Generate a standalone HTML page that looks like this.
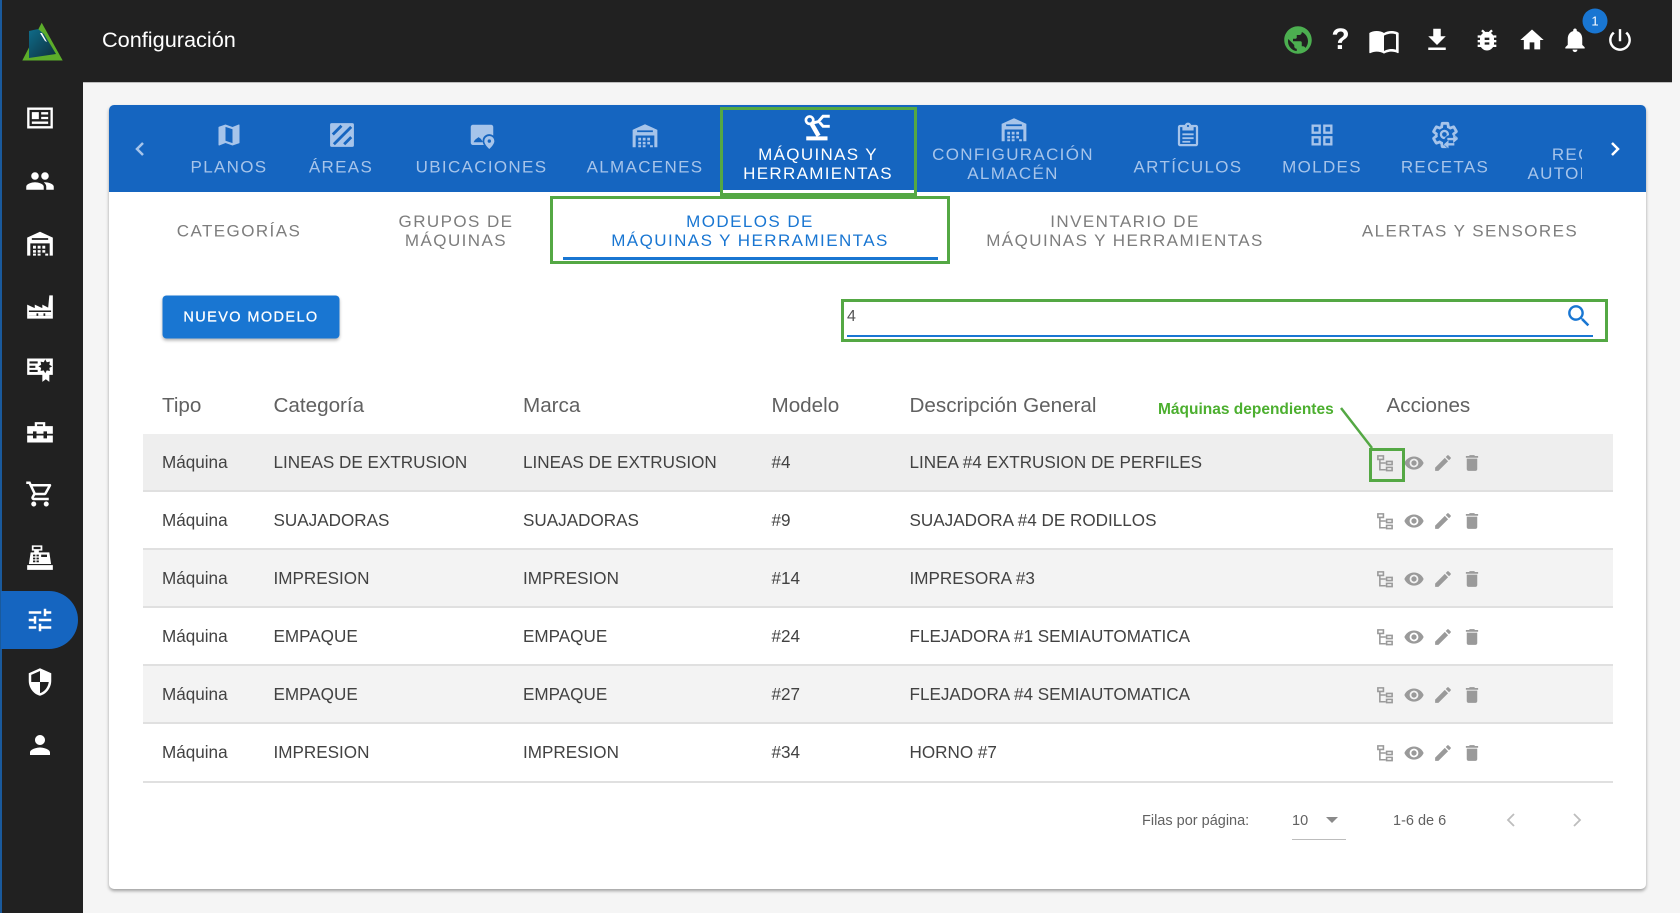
<!DOCTYPE html>
<html lang="es"><head><meta charset="utf-8"><title>Configuración</title>
<style>
html,body{margin:0;padding:0;width:1680px;height:913px;overflow:hidden;background:#f5f5f5;font-family:"Liberation Sans",sans-serif;color:#424242}
.b{position:absolute}
.t{position:absolute;white-space:nowrap;transform:translate(-50%,-50%);text-align:center;line-height:19px}
.l{position:absolute;white-space:nowrap;transform:translateY(-50%)}
.i{position:absolute;transform:translate(-50%,-50%);overflow:visible}
.side{fill:#fff}
.tab{font-size:17px;letter-spacing:1.33px;color:#a6c4ea}
.sub{font-size:17px;letter-spacing:1.43px;color:#7d7d7d}
.th{font-size:20.65px;color:#616161;top:406px}
.td{font-size:17.1px;color:#424242}
.ti{fill:#a6c4ea}
.ac{fill:#9a9a9a}
.g{border:3px solid #54a844;box-sizing:border-box;position:absolute}
.row{position:absolute;left:143px;width:1470px;height:58px;border-bottom:2px solid #e0e0e0;box-sizing:border-box}
</style></head>
<body>
<svg width="0" height="0" style="position:absolute"><defs>
<symbol id="news" viewBox="0 0 24 24"><path fill-rule="evenodd" d="M1 3h22v18H1zM3 5v14h18V5z"/><path d="M5 7h6v6H5zM13 7h6v2h-6zM13 11h6v2h-6zM5 15h14v2H5z"/></symbol>
<symbol id="people" viewBox="0 0 24 24"><path d="M16 11c1.66 0 2.99-1.34 2.99-3S17.66 5 16 5c-1.66 0-3 1.34-3 3s1.34 3 3 3zm-8 0c1.66 0 2.99-1.34 2.99-3S9.66 5 8 5C6.34 5 5 6.34 5 8s1.34 3 3 3zm0 2c-2.33 0-7 1.17-7 3.5V19h14v-2.5c0-2.33-4.67-3.5-7-3.5zm8 0c-.29 0-.62.02-.97.05 1.16.84 1.97 1.97 1.97 3.45V19h6v-2.5c0-2.33-4.67-3.5-7-3.5z"/></symbol>
<symbol id="ware" viewBox="0 0 24 24"><path fill-rule="evenodd" d="M12 1.500 23 6.500V22h-2.700V11.500H3.700V22H1V6.500zM5 7h14v1.500H5z"/><path d="M6 13.500h2.500V16H6zM10 13.500h2.500V16H10zM14 13.500h2.500V16H14zM6 17.200h2.500v2.200H6zM10 17.200h2.500v2.200H10zM14 17.200h2.500v2.200H14zM6 20.200h2.500V22H6zM10 20.200h2.500V22H10zM16.500 20.200H19V22h-2.500z"/></symbol>
<symbol id="factory" viewBox="0 0 24 24"><path fill-rule="evenodd" d="M1 22V10l6.500 3V10l6.500 3V10l5 2.500L20 2h3v20zM2.500 15v1.300h19V15zM9 17.500v2H10.500v-2zM15 17.500v2H16.500v-2zM2.500 19.500v.1h19v-.1z"/></symbol>
<symbol id="cert" viewBox="0 0 24 24"><path fill-rule="evenodd" d="M1 3h22v14h-3v6l-3-2.200L14 23v-6H1zM3 5.500v1.800h7V5.500zM3 9.200V11h5V9.200zM3 12.800v1.800h7v-1.800zM16.500 3.800l1.300 2.400 2.700-.5-.5 2.700 2.400 1.300-2.400 1.300.5 2.700-2.700-.5-1.300 2.400-1.300-2.400-2.700.5.500-2.700-2.400-1.300 2.400-1.300-.5-2.700 2.700.5z"/></symbol>
<symbol id="tool" viewBox="0 0 24 24"><path fill-rule="evenodd" d="M7.500 7V3.500h9V7H23v6.500h-5v-2h-3v2H9v-2H6v2H1V7zM9.500 5.500V7h5V5.500zM1 15h5v2.500h3V15h6v2.500h3V15h5v6H1z"/></symbol>
<symbol id="cart" viewBox="0 0 24 24"><path d="M15.550 13c.75 0 1.410-.41 1.750-1.030l3.580-6.490c.37-.66-.11-1.480-.87-1.480H5.210l-.94-2H1v2h2l3.600 7.590-1.350 2.440C4.520 15.370 5.480 17 7 17h12v-2H7l1.100-2h7.450zM6.160 6h12.150l-2.760 5H8.530L6.160 6zM7 18c-1.100 0-1.990.9-1.990 2S5.900 22 7 22s2-.9 2-2-.9-2-2-2zm10 0c-1.100 0-1.990.9-1.990 2s.89 2 1.990 2 2-.9 2-2-.9-2-2-2z"/></symbol>
<symbol id="reg" viewBox="0 0 24 24"><path fill-rule="evenodd" d="M5 2h9v4.500h-3V8h9l1.500 10h-19L4 8h3V6.500H5zM6.500 3.300v1.900h6V3.300zM6 10v1.500h2V10zM9 10v1.500h2V10zM6 12.500V14h2v-1.500zM9 12.500V14h2v-1.500zM6 15v1.500h2V15zM9 15v1.500h2V15zM13 10v2h5v-2z"/><path d="M1 19h22v4H1z"/></symbol>
<symbol id="tune" viewBox="0 0 24 24"><path d="M3 17v2h6v-2H3zM3 5v2h10V5H3zm10 16v-2h8v-2h-8v-2h-2v6h2zM7 9v2H3v2h4v2h2V9H7zm14 4v-2H11v2h10zm-6-4h2V7h4V5h-4V3h-2v6z"/></symbol>
<symbol id="shield" viewBox="0 0 24 24"><path d="M12 1L3 5v6c0 5.550 3.840 10.740 9 12 5.160-1.260 9-6.450 9-12V5l-9-4zm0 10.990h7c-.53 4.120-3.280 7.790-7 8.940V12H5V6.300l7-3.110v8.800z"/></symbol>
<symbol id="person" viewBox="0 0 24 24"><path d="M12 12c2.210 0 4-1.790 4-4s-1.790-4-4-4-4 1.790-4 4 1.790 4 4 4zm0 2c-2.670 0-8 1.340-8 4v2h16v-2c0-2.660-5.330-4-8-4z"/></symbol>
<symbol id="map" viewBox="0 0 24 24"><path d="M20.500 3l-.16.03L15 5.100 9 3 3.360 4.900c-.21.07-.36.25-.36.48V20.500c0 .28.22.5.5.5l.16-.03L9 18.900l6 2.100 5.640-1.900c.21-.07.36-.25.36-.48V3.500c0-.28-.22-.5-.5-.5zM15 19l-6-2.110V5l6 2.110V19z"/></symbol>
<symbol id="area" viewBox="0 0 24 24"><rect x="1" y="1" width="22" height="22" rx="1.500"/><path d="M3.500 11.500l8-8M4.500 20.500l16-16M14 20.500l6.500-6.500" stroke="#1565c0" stroke-width="2.600" fill="none"/></symbol>
<symbol id="imgloc" viewBox="0 0 24 24"><path fill-rule="evenodd" d="M4 2h16a2 2 0 0 1 2 2v7.500A6 6 0 0 0 12.500 16c0 1.500.5 3 1.200 4H4a2 2 0 0 1-2-2V4a2 2 0 0 1 2-2zM4.500 17.500h8.500l-2-3-2-1.500-2.500 1.800-1 1z"/><path fill-rule="evenodd" d="M18.500 12a4.500 4.500 0 0 1 4.500 4.500C23 19.500 18.500 23.500 18.500 23.500S14 19.500 14 16.500A4.500 4.500 0 0 1 18.500 12zM18.500 15a1.500 1.500 0 1 0 0 3 1.500 1.500 0 0 0 0-3z"/></symbol>
<symbol id="clip" viewBox="0 0 24 24"><path d="M19 3h-4.180C14.400 1.840 13.300 1 12 1s-2.400.84-2.820 2H5c-1.100 0-2 .9-2 2v15c0 1.100.9 2 2 2h14c1.100 0 2-.9 2-2V5c0-1.100-.9-2-2-2zm-7 0c.55 0 1 .45 1 1s-.45 1-1 1-1-.45-1-1 .45-1 1-1zm7 17H5V5h2v3h10V5h2v15z"/><path d="M7 10.500h10v1.700H7zM7 14h10v1.700H7zM7 17.200h7v1.600H7z"/></symbol>
<symbol id="grid" viewBox="0 0 24 24"><path d="M3 3v8h8V3H3zm6 6H5V5h4v4zm-6 4v8h8v-8H3zm6 6H5v-4h4v4zm4-16v8h8V3h-8zm6 6h-4V5h4v4zm-6 4v8h8v-8h-8zm6 6h-4v-4h4v4z"/></symbol>
<symbol id="gear" viewBox="0 0 24 24"><path fill="none" stroke="#a6c4ea" stroke-width="2.400" d="M19.430 12.980c.04-.32.07-.64.07-.98s-.03-.66-.07-.98l2.110-1.650c.19-.15.24-.42.12-.64l-2-3.460c-.12-.22-.39-.3-.61-.22l-2.490 1c-.52-.4-1.080-.73-1.690-.98l-.38-2.650C14.460 2.180 14.250 2 14 2h-4c-.25 0-.46.18-.49.42l-.38 2.650c-.61.25-1.170.59-1.690.98l-2.490-1c-.23-.09-.49 0-.61.22l-2 3.460c-.13.22-.07.49.12.64l2.110 1.650c-.04.32-.07.65-.07.98s.03.66.07.98l-2.110 1.650c-.19.15-.24.42-.12.64l2 3.460c.12.22.39.3.61.22l2.490-1c.52.4 1.080.73 1.690.98l.38 2.650c.03.24.24.42.49.42h4c.25 0 .46-.18.49-.42l.38-2.650c.61-.25 1.170-.59 1.690-.98l2.490 1c.23.09.49 0 .61-.22l2-3.460c.12-.22.07-.49-.12-.64z"/><circle cx="11.500" cy="11.500" r="3" fill="none" stroke="#a6c4ea" stroke-width="2"/><circle cx="17" cy="18" r="6" fill="#1565c0"/><path fill="#a6c4ea" d="M14 14.500h5v-2.500l4 3.500-4 3.500v-2.500h-5zM11 20l4-3.500V19h5v2h-5v2.500z"/></symbol>
<symbol id="robot" viewBox="0 0 25 25"><circle cx="5" cy="5.500" r="3.300" fill="none" stroke="#fff" stroke-width="2.400"/><path d="M7 9l6 10.500" stroke="#fff" stroke-width="4" fill="none"/><path d="M8 8l6-1.500M13 6.500 17 2h6M14 7.500l3 3.500h6" stroke="#fff" stroke-width="2.600" fill="none"/><path d="M2 20h19v3.500H2z" fill="#fff"/></symbol>
<symbol id="tree" viewBox="0 0 24 24"><path fill-rule="evenodd" d="M2 2h9v6.500H2zM4 4v2.500h5V4zM13 9h9v6h-9zM15 11v2h5v-2zM13 16.500h9v6h-9zM15 18.500v2h5v-2z"/><path d="M4.500 8H6.500v11.500h6.500v2H4.500zM6 11h7v2H6z"/></symbol>
<symbol id="eye" viewBox="0 0 24 24"><path d="M12 4.500C7 4.500 2.730 7.610 1 12c1.730 4.390 6 7.500 11 7.500s9.270-3.110 11-7.500c-1.730-4.390-6-7.500-11-7.500zM12 17c-2.760 0-5-2.240-5-5s2.240-5 5-5 5 2.240 5 5-2.240 5-5 5zm0-8c-1.660 0-3 1.340-3 3s1.340 3 3 3 3-1.340 3-3-1.340-3-3-3z"/></symbol>
<symbol id="edit" viewBox="0 0 24 24"><path d="M3 17.250V21h3.750L17.810 9.940l-3.750-3.750L3 17.250zM20.710 7.040c.39-.39.39-1.020 0-1.410l-2.340-2.340c-.39-.39-1.020-.39-1.410 0l-1.830 1.830 3.750 3.750 1.830-1.830z"/></symbol>
<symbol id="del" viewBox="0 0 24 24"><path d="M6 19c0 1.100.9 2 2 2h8c1.100 0 2-.9 2-2V7H6v12zM19 4h-3.500l-1-1h-5l-1 1H5v2h14V4z"/></symbol>
</defs></svg>

<!-- app chrome -->
<div class="b" style="left:0;top:0;width:1672px;height:82px;background:#212121;border-bottom:1px solid #bdbdbd"></div>
<div class="b" style="left:0;top:0;width:83px;height:913px;background:#212121"></div>
<div class="b" style="left:0;top:0;width:1.500px;height:913px;background:#1a5a9c"></div>

<svg class="i" style="left:42px;top:42px;width:46px;height:40px" viewBox="0 0 46 40">
<defs><linearGradient id="lg" x1="0" y1="0" x2="1" y2="1"><stop offset="0" stop-color="#0f6c8a"/><stop offset="1" stop-color="#0d2f3c"/></linearGradient></defs>
<path d="M22.700 .7 43.700 38.500H3.300z" fill="#5cad2a"/><path d="M10 9 19 7 25 12 37 32 10 36z" fill="url(#lg)"/><path d="M21 11 23 11 28 20 26 19z" fill="#fff"/></svg>
<div class="l" style="left:102px;top:40px;font-size:21.7px;color:#fff">Configuración</div>

<!-- sidebar -->
<svg class="i side" style="left:40px;top:118px;width:28px;height:28px"><use href="#news"/></svg>
<svg class="i side" style="left:40px;top:181px;width:30px;height:30px"><use href="#people"/></svg>
<svg class="i side" style="left:40px;top:244px;width:28px;height:28px"><use href="#ware"/></svg>
<svg class="i side" style="left:40px;top:307px;width:28px;height:28px"><use href="#factory"/></svg>
<svg class="i side" style="left:40px;top:369px;width:28px;height:28px"><use href="#cert"/></svg>
<svg class="i side" style="left:40px;top:432px;width:28px;height:28px"><use href="#tool"/></svg>
<svg class="i side" style="left:40px;top:494px;width:30px;height:30px"><use href="#cart"/></svg>
<svg class="i side" style="left:40px;top:557px;width:28px;height:28px"><use href="#reg"/></svg>
<div class="b" style="left:1px;top:591px;width:77px;height:58px;background:#1565c0;border-radius:0 29px 29px 0"></div>
<svg class="i side" style="left:40px;top:620px;width:30px;height:30px"><use href="#tune"/></svg>
<svg class="i side" style="left:40px;top:682px;width:30px;height:30px"><use href="#shield"/></svg>
<svg class="i side" style="left:40px;top:745px;width:30px;height:30px"><use href="#person"/></svg>

<!-- topbar icons -->
<svg class="i" style="left:1297.500px;top:40px;width:30px;height:30px" viewBox="0 0 24 24"><circle cx="12" cy="12" r="11" fill="#212121"/><path fill="#4caf50" d="M12 1C5.930 1 1 5.930 1 12s4.930 11 11 11 11-4.930 11-11S18.070 1 12 1zm-1 19.930c-3.950-.49-7-3.850-7-7.930 0-.62.08-1.210.21-1.790L9 16v1c0 1.100.9 2 2 2v1.930zm6.900-2.540c-.26-.81-1-1.390-1.900-1.390h-1v-3c0-.55-.45-1-1-1H8v-2h2c.55 0 1-.45 1-1V8h2c1.100 0 2-.9 2-2v-.41c2.930 1.190 5 4.060 5 7.410 0 2.080-.8 3.970-2.100 5.390z"/></svg>
<div class="t" style="left:1340.500px;top:40px;font-size:30px;font-weight:bold;color:#fff;line-height:30px">?</div>
<svg class="i" style="left:1384px;top:41px;fill:#fff;width:32px;height:32px" viewBox="0 0 24 24"><path d="M21 5c-1.110-.35-2.330-.5-3.500-.5-1.950 0-4.050.4-5.500 1.500-1.450-1.100-3.550-1.500-5.500-1.500S2.450 4.900 1 6v14.650c0 .25.25.5.5.5.1 0 .15-.05.25-.05C3.100 20.450 5.050 20 6.500 20c1.950 0 4.050.4 5.500 1.500 1.350-.85 3.800-1.500 5.500-1.500 1.650 0 3.350.3 4.750 1.050.1.05.15.05.25.05.25 0 .5-.25.5-.5V6c-.6-.45-1.250-.75-2-1zm0 13.500c-1.100-.35-2.300-.5-3.500-.5-1.700 0-4.150.65-5.500 1.500V8c1.350-.85 3.800-1.500 5.500-1.500 1.200 0 2.400.15 3.500.5v11.500z"/></svg>
<svg class="i" style="left:1437px;top:40px;fill:#fff;width:30px;height:30px" viewBox="0 0 24 24"><path d="M19 9h-4V3H9v6H5l7 7 7-7zM5 18v2h14v-2H5z"/></svg>
<svg class="i" style="left:1487px;top:40px;fill:#fff;width:28px;height:28px" viewBox="0 0 24 24"><path d="M20 8h-2.810c-.45-.78-1.070-1.450-1.820-1.960L17 4.410 15.590 3l-2.170 2.170C12.960 5.060 12.490 5 12 5c-.49 0-.96.06-1.410.17L8.410 3 7 4.410l1.620 1.630C7.880 6.550 7.260 7.220 6.810 8H4v2h2.090c-.05.33-.09.66-.09 1v1H4v2h2v1c0 .34.04.67.09 1H4v2h2.810c1.040 1.790 2.970 3 5.190 3s4.150-1.210 5.190-3H20v-2h-2.090c.05-.33.09-.66.09-1v-1h2v-2h-2v-1c0-.34-.04-.67-.09-1H20V8zm-6 8h-4v-2h4v2zm0-4h-4v-2h4v2z"/></svg>
<svg class="i" style="left:1532px;top:40px;fill:#fff;width:28px;height:28px" viewBox="0 0 24 24"><path d="M10 20v-6h4v6h5v-8h3L12 3 2 12h3v8z"/></svg>
<svg class="i" style="left:1575px;top:40px;fill:#fff;width:29px;height:29px" viewBox="0 0 24 24"><path d="M12 22c1.100 0 2-.9 2-2h-4c0 1.100.89 2 2 2zm6-6v-5c0-3.070-1.640-5.640-4.500-6.320V4c0-.83-.67-1.500-1.500-1.500s-1.500.67-1.500 1.500v.68C7.630 5.360 6 7.920 6 11v5l-2 2v1h16v-1l-2-2z"/></svg>
<div class="t" style="left:1595px;top:21px;width:25px;height:25px;border-radius:50%;background:#1976d2;color:#fff;font-size:13px;line-height:25px">1</div>
<svg class="i" style="left:1620px;top:40px;fill:#fff;width:29px;height:29px" viewBox="0 0 24 24"><path d="M13 3h-2v10h2V3zm4.830 2.170l-1.420 1.420C17.990 7.860 19 9.810 19 12c0 3.870-3.130 7-7 7s-7-3.130-7-7c0-2.190 1.010-4.140 2.580-5.420L6.170 5.170C4.230 6.820 3 9.260 3 12c0 4.970 4.030 9 9 9s9-4.030 9-9c0-2.740-1.230-5.180-3.170-6.830z"/></svg>

<!-- card -->
<div class="b" style="left:109px;top:105px;width:1537px;height:784px;background:#fff;border-radius:5px;box-shadow:0 2px 3px rgba(0,0,0,.35)"></div>
<div class="b" style="left:109px;top:105px;width:1537px;height:87px;background:#1565c0;border-radius:5px 5px 0 0"></div>

<!-- main tabs -->
<svg class="i" style="left:140px;top:149px;fill:none;stroke:#a6c4ea;stroke-width:2.500;width:12px;height:16px" viewBox="0 0 12 16"><path d="M9 2 3 8l6 6"/></svg>
<svg class="i" style="left:1615px;top:149px;fill:none;stroke:#fff;stroke-width:2.500;width:12px;height:16px" viewBox="0 0 12 16"><path d="M3 2l6 6-6 6"/></svg>

<svg class="i ti" style="left:229px;top:135px;width:28px;height:28px"><use href="#map"/></svg>
<div class="t tab" style="left:229px;top:167px">PLANOS</div>
<svg class="i ti" style="left:342px;top:135px;width:26px;height:26px"><use href="#area"/></svg>
<div class="t tab" style="left:341px;top:167px">ÁREAS</div>
<svg class="i ti" style="left:482px;top:136px;width:27px;height:27px"><use href="#imgloc"/></svg>
<div class="t tab" style="left:481.500px;top:167px">UBICACIONES</div>
<svg class="i ti" style="left:645px;top:136px;width:27px;height:27px"><use href="#ware"/></svg>
<div class="t tab" style="left:645px;top:167px">ALMACENES</div>

<svg class="i" style="left:818px;top:128px;width:28px;height:28px"><use href="#robot"/></svg>
<div class="t tab" style="left:818px;top:163.500px;color:#fff">MÁQUINAS Y<br>HERRAMIENTAS</div>
<div class="b" style="left:723px;top:190px;width:191px;height:3px;background:#fff"></div>
<div class="g" style="left:720px;top:107px;width:197px;height:89px"></div>

<svg class="i ti" style="left:1014px;top:130px;width:27px;height:27px"><use href="#ware"/></svg>
<div class="t tab" style="left:1013px;top:163.500px">CONFIGURACIÓN<br>ALMACÉN</div>
<svg class="i ti" style="left:1188px;top:135px;width:27px;height:27px"><use href="#clip"/></svg>
<div class="t tab" style="left:1188px;top:167px">ARTÍCULOS</div>
<svg class="i ti" style="left:1322px;top:135px;width:28px;height:28px"><use href="#grid"/></svg>
<div class="t tab" style="left:1322px;top:167px">MOLDES</div>
<svg class="i" style="left:1445px;top:135px;width:28px;height:28px"><use href="#gear"/></svg>
<div class="t tab" style="left:1445px;top:167px">RECETAS</div>
<div class="b" style="left:1520px;top:105px;width:62px;height:87px;overflow:hidden"><div class="t tab" style="left:76px;top:58.500px">RECETAS<br>AUTOMÁTICAS</div></div>

<!-- sub tabs -->
<div class="t sub" style="left:239px;top:230.500px">CATEGORÍAS</div>
<div class="t sub" style="left:456px;top:230.500px">GRUPOS DE<br>MÁQUINAS</div>
<div class="t sub" style="left:750px;top:230.500px;color:#1976d2">MODELOS DE<br>MÁQUINAS Y HERRAMIENTAS</div>
<div class="b" style="left:563px;top:257px;width:375px;height:2.500px;background:#1976d2"></div>
<div class="g" style="left:550px;top:196px;width:400px;height:68px"></div>
<div class="t sub" style="left:1125px;top:230.500px">INVENTARIO DE<br>MÁQUINAS Y HERRAMIENTAS</div>
<div class="t sub" style="left:1470px;top:230.500px">ALERTAS Y SENSORES</div>

<!-- toolbar -->
<div class="t" style="left:251px;top:317px;width:177px;height:43px;background:#1976d2;border-radius:4px;color:#fff;font-size:14.500px;letter-spacing:1.400px;line-height:45px;box-shadow:0 2px 3px rgba(0,0,0,.3);-webkit-text-stroke:.25px #fff">NUEVO MODELO</div>
<div class="g" style="left:841px;top:299px;width:767px;height:43px"></div>
<div class="l" style="left:847px;top:317px;font-size:16px;color:#555">4</div>
<div class="b" style="left:847px;top:334.500px;width:746px;height:2px;background:#1976d2"></div>
<svg class="i" style="left:1578.500px;top:316px;width:29px;height:29px;fill:#1976d2" viewBox="0 0 24 24"><path d="M15.500 14h-.79l-.28-.27C15.410 12.590 16 11.110 16 9.500 16 5.910 13.090 3 9.500 3S3 5.910 3 9.500 5.910 16 9.500 16c1.610 0 3.090-.59 4.230-1.570l.27.28v.79l5 4.990L20.490 19l-4.990-5zm-6 0C7.010 14 5 11.990 5 9.500S7.010 5 9.500 5 14 7.010 14 9.500 11.990 14 9.500 14z"/></svg>

<!-- table -->
<div class="l th" style="left:162px">Tipo</div>
<div class="l th" style="left:273.500px">Categoría</div>
<div class="l th" style="left:523px">Marca</div>
<div class="l th" style="left:771.500px">Modelo</div>
<div class="l th" style="left:909.500px">Descripción General</div>
<div class="l th" style="left:1386.500px">Acciones</div>

<div class="row" style="top:433.500px;background:#eee"></div>
<div class="row" style="top:491.500px"></div>
<div class="row" style="top:549.500px;background:#f3f3f3"></div>
<div class="row" style="top:607.500px"></div>
<div class="row" style="top:665.500px;background:#f3f3f3"></div>
<div class="row" style="top:723.500px;height:59px"></div>

<div class="l td" style="left:162px;top:463px">Máquina</div><div class="l td" style="left:273.500px;top:463px">LINEAS DE EXTRUSION</div><div class="l td" style="left:523px;top:463px">LINEAS DE EXTRUSION</div><div class="l td" style="left:771.500px;top:463px">#4</div><div class="l td" style="left:909.500px;top:463px">LINEA #4 EXTRUSION DE PERFILES</div>
<div class="l td" style="left:162px;top:521px">Máquina</div><div class="l td" style="left:273.500px;top:521px">SUAJADORAS</div><div class="l td" style="left:523px;top:521px">SUAJADORAS</div><div class="l td" style="left:771.500px;top:521px">#9</div><div class="l td" style="left:909.500px;top:521px">SUAJADORA #4 DE RODILLOS</div>
<div class="l td" style="left:162px;top:579px">Máquina</div><div class="l td" style="left:273.500px;top:579px">IMPRESION</div><div class="l td" style="left:523px;top:579px">IMPRESION</div><div class="l td" style="left:771.500px;top:579px">#14</div><div class="l td" style="left:909.500px;top:579px">IMPRESORA #3</div>
<div class="l td" style="left:162px;top:637px">Máquina</div><div class="l td" style="left:273.500px;top:637px">EMPAQUE</div><div class="l td" style="left:523px;top:637px">EMPAQUE</div><div class="l td" style="left:771.500px;top:637px">#24</div><div class="l td" style="left:909.500px;top:637px">FLEJADORA #1 SEMIAUTOMATICA</div>
<div class="l td" style="left:162px;top:695px">Máquina</div><div class="l td" style="left:273.500px;top:695px">EMPAQUE</div><div class="l td" style="left:523px;top:695px">EMPAQUE</div><div class="l td" style="left:771.500px;top:695px">#27</div><div class="l td" style="left:909.500px;top:695px">FLEJADORA #4 SEMIAUTOMATICA</div>
<div class="l td" style="left:162px;top:753px">Máquina</div><div class="l td" style="left:273.500px;top:753px">IMPRESION</div><div class="l td" style="left:523px;top:753px">IMPRESION</div><div class="l td" style="left:771.500px;top:753px">#34</div><div class="l td" style="left:909.500px;top:753px">HORNO #7</div>

<svg class="i ac" style="left:1385px;top:463px;width:19px;height:19px"><use href="#tree"/></svg><svg class="i ac" style="left:1414px;top:463px;width:21px;height:21px"><use href="#eye"/></svg><svg class="i ac" style="left:1443px;top:463px;width:21px;height:21px"><use href="#edit"/></svg><svg class="i ac" style="left:1472px;top:463px;width:21px;height:21px"><use href="#del"/></svg>
<svg class="i ac" style="left:1385px;top:521px;width:19px;height:19px"><use href="#tree"/></svg><svg class="i ac" style="left:1414px;top:521px;width:21px;height:21px"><use href="#eye"/></svg><svg class="i ac" style="left:1443px;top:521px;width:21px;height:21px"><use href="#edit"/></svg><svg class="i ac" style="left:1472px;top:521px;width:21px;height:21px"><use href="#del"/></svg>
<svg class="i ac" style="left:1385px;top:579px;width:19px;height:19px"><use href="#tree"/></svg><svg class="i ac" style="left:1414px;top:579px;width:21px;height:21px"><use href="#eye"/></svg><svg class="i ac" style="left:1443px;top:579px;width:21px;height:21px"><use href="#edit"/></svg><svg class="i ac" style="left:1472px;top:579px;width:21px;height:21px"><use href="#del"/></svg>
<svg class="i ac" style="left:1385px;top:637px;width:19px;height:19px"><use href="#tree"/></svg><svg class="i ac" style="left:1414px;top:637px;width:21px;height:21px"><use href="#eye"/></svg><svg class="i ac" style="left:1443px;top:637px;width:21px;height:21px"><use href="#edit"/></svg><svg class="i ac" style="left:1472px;top:637px;width:21px;height:21px"><use href="#del"/></svg>
<svg class="i ac" style="left:1385px;top:695px;width:19px;height:19px"><use href="#tree"/></svg><svg class="i ac" style="left:1414px;top:695px;width:21px;height:21px"><use href="#eye"/></svg><svg class="i ac" style="left:1443px;top:695px;width:21px;height:21px"><use href="#edit"/></svg><svg class="i ac" style="left:1472px;top:695px;width:21px;height:21px"><use href="#del"/></svg>
<svg class="i ac" style="left:1385px;top:753px;width:19px;height:19px"><use href="#tree"/></svg><svg class="i ac" style="left:1414px;top:753px;width:21px;height:21px"><use href="#eye"/></svg><svg class="i ac" style="left:1443px;top:753px;width:21px;height:21px"><use href="#edit"/></svg><svg class="i ac" style="left:1472px;top:753px;width:21px;height:21px"><use href="#del"/></svg>

<!-- annotation -->
<div class="l" style="left:1158px;top:410px;font-size:15.500px;font-weight:bold;color:#4caf2f">Máquinas dependientes</div>
<svg class="b" style="left:1330px;top:400px;width:60px;height:60px"><path d="M11 8 42 48" stroke="#54a844" stroke-width="2.500" fill="none"/></svg>
<div class="g" style="left:1369px;top:448px;width:36px;height:34px"></div>

<!-- pagination -->
<div class="l" style="left:1142px;top:820.500px;font-size:14.500px;color:#616161">Filas por página:</div>
<div class="l" style="left:1292px;top:820.500px;font-size:14.500px;color:#616161">10</div>
<svg class="i" style="left:1332px;top:820px;width:14px;height:8px;fill:#8a8a8a" viewBox="0 0 14 8"><path d="M1 1h12L7 7z"/></svg>
<div class="b" style="left:1292px;top:839px;width:54px;height:1px;background:#bdbdbd"></div>
<div class="l" style="left:1393px;top:820.500px;font-size:14.500px;color:#616161">1-6 de 6</div>
<svg class="i" style="left:1511px;top:819.500px;width:12px;height:16px;fill:none;stroke:#bdbdbd;stroke-width:1.800" viewBox="0 0 12 16"><path d="M9 2 3 8l6 6"/></svg>
<svg class="i" style="left:1577px;top:819.500px;width:12px;height:16px;fill:none;stroke:#bdbdbd;stroke-width:1.800" viewBox="0 0 12 16"><path d="M3 2l6 6-6 6"/></svg>
</body></html>
